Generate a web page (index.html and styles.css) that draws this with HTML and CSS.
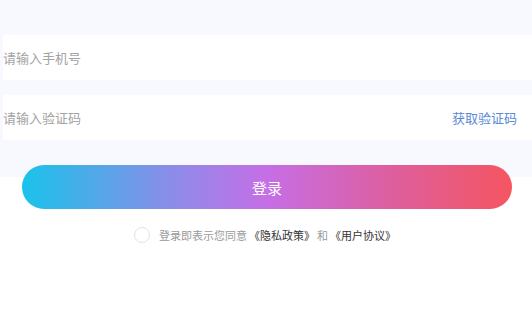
FILE: index.html
```html
<!DOCTYPE html>
<html>
<head>
  <meta charset="utf-8">
  <link rel="stylesheet" href="styles.css">
</head>
<body>
  <div class="form">
    <div class="field">
      <span class="placeholder">请输入手机号</span>
    </div>
    <div class="field">
      <span class="placeholder">请输入验证码</span>
      <span class="get-code">获取验证码</span>
    </div>
  </div>

  <div class="login-wrap">
    <button class="login-btn">登录</button>
  </div>

  <div class="agree">
    <span class="check"></span>
    <span class="tip">登录即表示您同意</span>
    <span class="link">《隐私政策》</span>
    <span class="tip">和</span>
    <span class="link">《用户协议》</span>
  </div>
</body>
</html>
```

FILE: styles.css
```css
body {
  margin: 0;
  background: #fff;
  font-family: "Noto Sans CJK SC", "Noto Sans", sans-serif;
}

.form {
  background: #f7f9fe;
  padding: 35px 0 25px 3px;
  display: flex;
  flex-direction: column;
  gap: 15px;
}

.field {
  height: 45px;
  background: #fff;
  display: flex;
  align-items: center;
  justify-content: space-between;
  padding-right: 15px;
}

.placeholder {
  font-size: 13px;
  color: #a3a3a3;
}

.get-code {
  font-size: 13px;
  color: #5b8ad6;
}

.login-wrap {
  padding: 0 20px 0 22px;
  background: linear-gradient(to bottom, #f7f9fe 12px, #fff 12px);
}

.login-btn {
  display: block;
  width: 100%;
  height: 44px;
  border: none;
  border-radius: 22px;
  background: linear-gradient(to right, #19c3ea 0%, #8a8de8 30%, #c66ee6 50%, #dd5f9f 75%, #f55560 100%);
  color: #fff;
  font-family: inherit;
  font-size: 15px;
}

.agree {
  display: flex;
  align-items: center;
  justify-content: center;
  margin-top: 18px;
  font-size: 11px;
}

.check {
  width: 14px;
  height: 14px;
  border: 1px solid #e3e3e3;
  border-radius: 50%;
  margin-right: 9px;
}

.tip {
  color: #9a9a9a;
}

.link {
  color: #333;
  margin: 0 2px;
}
```
